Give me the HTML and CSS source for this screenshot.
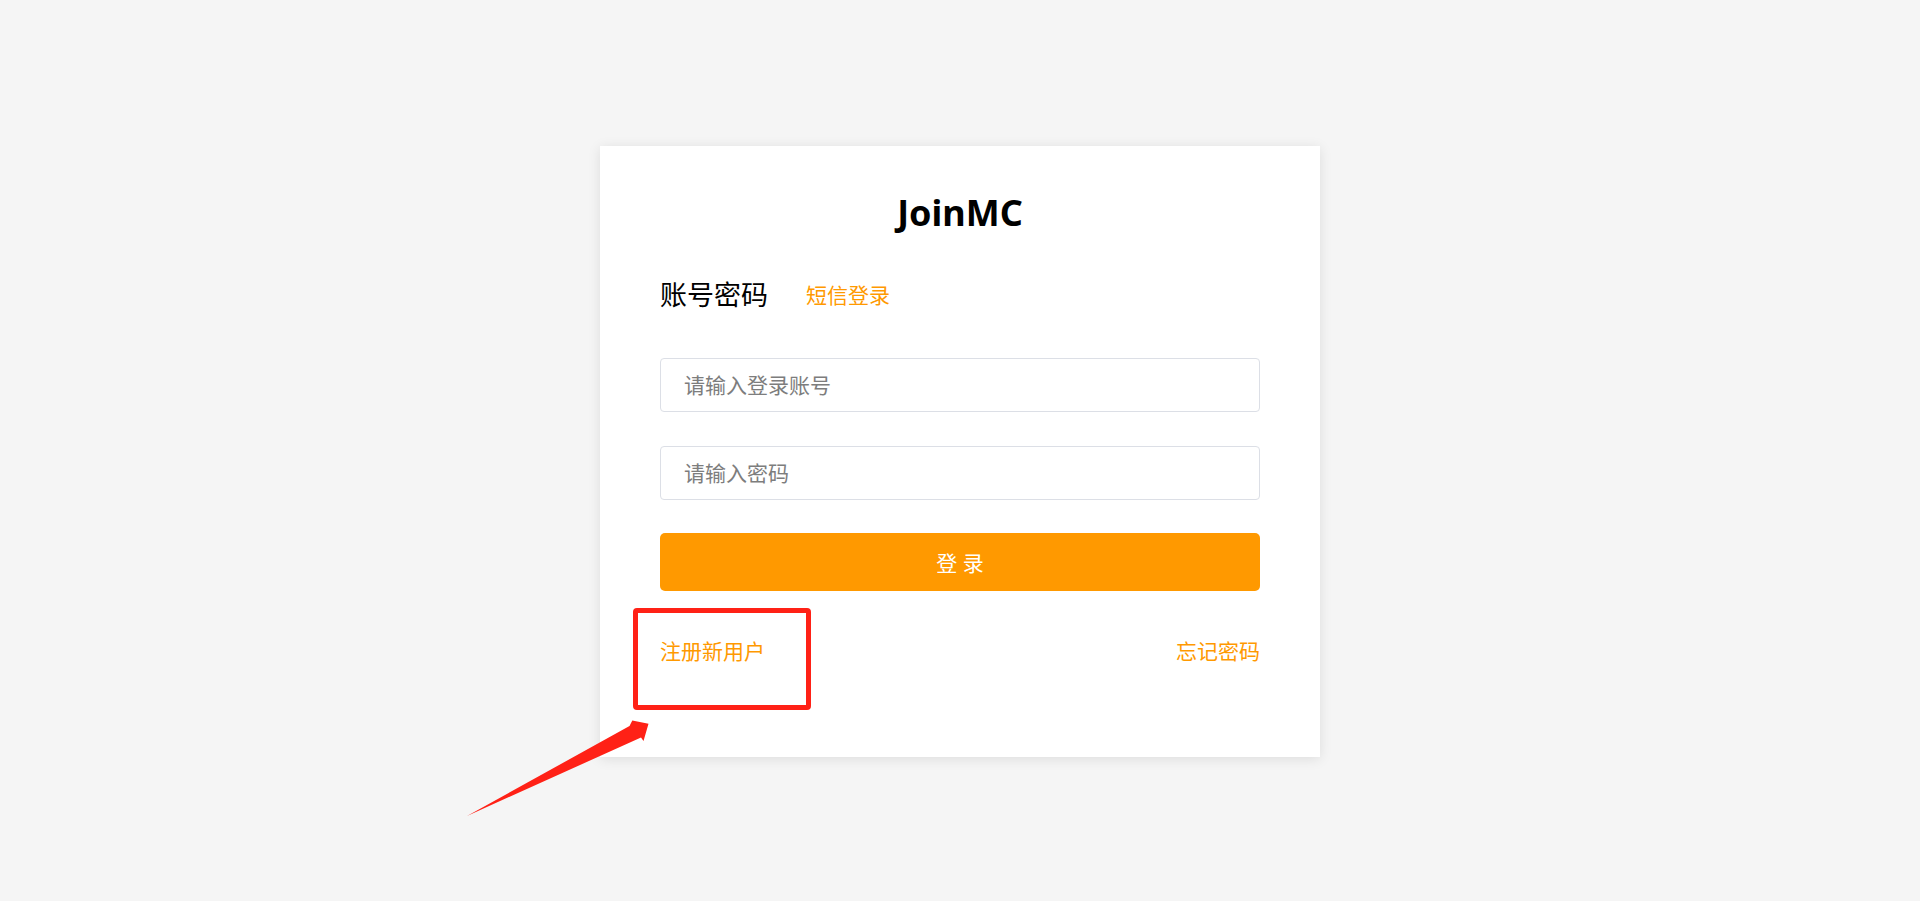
FILE: index.html
```html
<!DOCTYPE html>
<html lang="zh-CN">
<head>
<meta charset="utf-8">
<title>JoinMC 登录</title>
<link rel="stylesheet" href="styles.css">
</head>
<body>
<div class="page">
  <div class="card">
    <h1 class="title">JoinMC</h1>
    <div class="tabs">
      <span class="tab tab-active">账号密码</span>
      <span class="tab tab-link">短信登录</span>
    </div>
    <form class="form">
      <input class="field" type="text" placeholder="请输入登录账号">
      <input class="field" type="password" placeholder="请输入密码">
      <button class="submit" type="button">登 录</button>
    </form>
    <div class="links">
      <a class="link">注册新用户</a>
      <a class="link">忘记密码</a>
    </div>
  </div>
</div>
<div class="mark-box"></div>
<svg class="mark-arrow" width="1920" height="901" viewBox="0 0 1920 901">
  <polygon points="467,816 629.5,726 632.3,720.5 648.5,723.8 643.5,741 641,737.5" fill="#ff2116"/>
</svg>
</body>
</html>
```
FILE: styles.css
```css
html, body {
  margin: 0;
  padding: 0;
}
body {
  background: #f5f5f5;
  width: 1920px;
  height: 901px;
  overflow: hidden;
  position: relative;
  font-family: "Noto Sans", "Noto Sans CJK SC", sans-serif;
}
.page {
  display: flex;
  justify-content: center;
  padding-top: 146px;
}
.card {
  width: 720px;
  height: 611px;
  box-sizing: border-box;
  background: #fff;
  box-shadow: 0 2px 12px 0 rgba(0, 0, 0, 0.1);
  padding: 43px 60px 0;
  display: flex;
  flex-direction: column;
}
.title {
  margin: 0;
  font-size: 36px;
  line-height: 48px;
  font-weight: 700;
  color: #000;
  text-align: center;
}
.tabs {
  margin-top: 38px;
  height: 40px;
  display: flex;
  align-items: center;
  gap: 38px;
}
.tab {
  line-height: 40px;
}
.tab-active {
  font-size: 27px;
  color: #000;
}
.tab-link {
  font-size: 21px;
  color: #ff9900;
}
.form {
  margin: 43px 0 0;
  display: flex;
  flex-direction: column;
}
.field {
  height: 54px;
  box-sizing: border-box;
  border: 1px solid #dcdfe6;
  border-radius: 4px;
  padding: 0 23px;
  font-family: inherit;
  font-size: 21px;
  color: #333;
  outline: none;
  background: #fff;
}
.field + .field {
  margin-top: 34px;
}
.field::placeholder {
  color: #7d7d7d;
}
.submit {
  margin-top: 33px;
  height: 58px;
  border: none;
  border-radius: 5px;
  background: #ff9900;
  color: #fff;
  font-family: inherit;
  font-size: 21px;
  cursor: pointer;
}
.links {
  margin-top: 45px;
  display: flex;
  justify-content: space-between;
  align-items: center;
  height: 30px;
}
.link {
  font-size: 21px;
  line-height: 30px;
  color: #ff9900;
  cursor: pointer;
}
.mark-box {
  position: absolute;
  left: 633px;
  top: 608px;
  width: 178px;
  height: 102px;
  box-sizing: border-box;
  border: 5px solid #ff2116;
  border-radius: 4px;
  pointer-events: none;
}
.mark-arrow {
  position: absolute;
  left: 0;
  top: 0;
  pointer-events: none;
}
```
